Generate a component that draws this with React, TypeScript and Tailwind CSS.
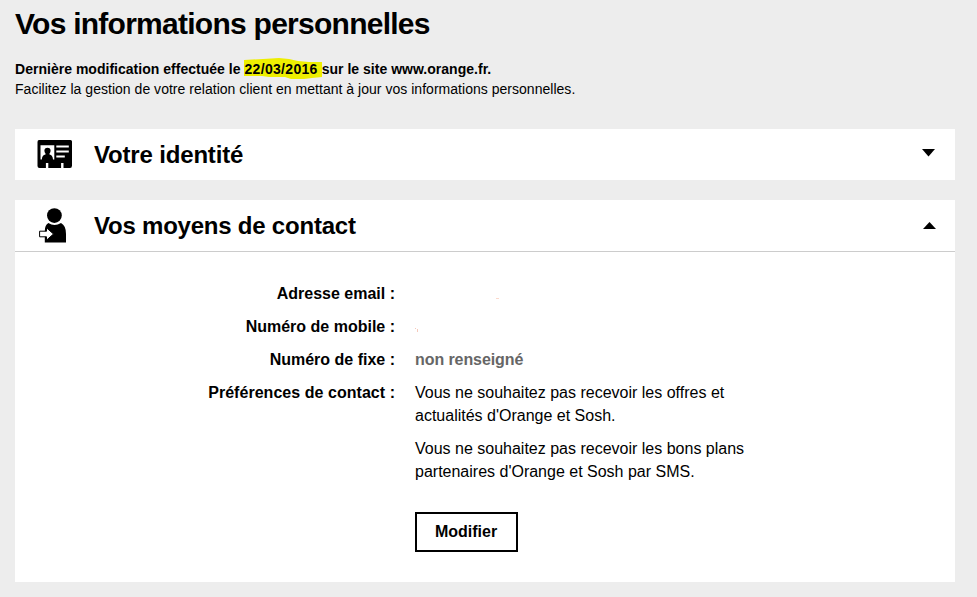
import type { ReactNode } from "react";

const contactRows = [
  { label: "Adresse email :", value: "" },
  { label: "Numéro de mobile :", value: "" },
  { label: "Numéro de fixe :", value: "non renseigné" },
];

const IdentityIcon = () => (
  <svg className="-mt-0.5" width="36" height="28" viewBox="0 0 36 28">
    <path
      d="M2 0h31.500q1.500 0 1.500 1.500v24q0 2.500-2 2.500h-6.500v-5h-2.400v5H11.300v-5H8.900v5H2.500q-2 0-2-2V2q0-2 1.500-2z"
      fill="#000"
    />
    <path d="M3.500 5.300h13.800v14.200h-1.300q-.3-4.300-3.500-5v-1q1.100-1 1.100-2.700 0-3.100-3.100-3.100t-3.100 3.100q0 1.700 1.100 2.700v1q-3.400.7-3.700 5H3.500z" fill="#fff" />
    <path d="M19.300 6.500h12.500M19.300 11.500h12.500M19.300 16.500h8.500" stroke="#fff" strokeWidth="2" />
  </svg>
);

const ContactIcon = () => (
  <svg className="ml-0.5" width="28" height="36" viewBox="0 0 28 36">
    <circle cx="15.400" cy="7.600" r="7.400" fill="#000" />
    <path d="M9.400 15q6 4 12.600 0Q27 17.500 27 26v8.500H5.800V23q0-6 3.600-8z" fill="#000" />
    <path d="M.6 23.200h6.900v-3.400l7 6.200-7 6.200v-3.400H.6z" fill="#fff" stroke="#000" strokeWidth="1" />
  </svg>
);

type SectionHeaderProps = {
  icon: ReactNode;
  title: string;
  titleClass: string;
  open?: boolean;
};

const SectionHeader = ({ icon, title, titleClass, open = false }: SectionHeaderProps) => (
  <button
    type="button"
    aria-expanded={open}
    className="flex h-[51px] w-full items-center pr-[19px] pl-[22px] text-left"
  >
    <span className="w-[57px]">{icon}</span>
    <span className={titleClass}>{title}</span>
    <svg
      className={open ? "mb-0.5 ml-auto" : "mr-px mb-1 ml-auto"}
      width="13"
      height="8"
      viewBox="0 0 13 8"
    >
      <path d={open ? "M0 8L6.500 1L13 8z" : "M0 0h13L6.500 7.500z"} fill="#000" />
    </svg>
  </button>
);

export default function App() {
  return (
    <main className="min-h-screen bg-[#ededed] pr-[22px] pl-[15px] font-['Liberation_Sans',Arial,sans-serif] text-black">
      <h1 className="pt-[5px] text-[30px] leading-[38px] font-bold tracking-[-0.74px] whitespace-nowrap">
        Vos informations personnelles
      </h1>

      <div className="pt-4 text-sm leading-5 whitespace-nowrap">
        <p className="isolate font-bold tracking-[0.02px]">
          Dernière modification effectuée le{" "}
          <span className="relative tracking-[0.32px]">
            <svg className="absolute -top-[3px] left-0 -z-10" width="78" height="22" viewBox="0 0 78 22">
              <path d="M0 2l19-1 16-1 10 1 9 2 11 1h13v15l-10 1-8 1H47l-6-2H25l-7-1H0z" fill="#eeee00" />
            </svg>
            22/03/2016
          </span>{" "}
          sur le site www.orange.fr.
        </p>
        <p className="tracking-[0.025px]">
          Facilitez la gestion de votre relation client en mettant à jour vos informations personnelles.
        </p>
      </div>

      <section className="mt-[30px] bg-white">
        <SectionHeader
          icon={<IdentityIcon />}
          title="Votre identité"
          titleClass="text-2xl font-bold tracking-[-0.17px]"
        />
      </section>

      <section className="mt-5 h-[382px] bg-white">
        <div className="border-b border-[#cccccc]">
          <SectionHeader
            icon={<ContactIcon />}
            title="Vos moyens de contact"
            titleClass="text-2xl font-bold tracking-[-0.22px]"
            open
          />
        </div>

        <dl className="relative grid grid-cols-[380px_1fr] gap-x-5 gap-y-2.5 pt-[30px] text-base leading-[23px]">
          {contactRows.map((row) => (
            <div key={row.label} className="contents">
              <dt className="text-right font-bold">{row.label}</dt>
              <dd className="font-bold tracking-[-0.08px] text-[#666666]">{row.value}</dd>
            </div>
          ))}
          <dt className="text-right font-bold tracking-[0.04px]">Préférences de contact :</dt>
          <dd className="flex flex-col gap-2.5">
            <p>
              Vous ne souhaitez pas recevoir les offres et
              <br />
              actualités d'Orange et Sosh.
            </p>
            <p>
              Vous ne souhaitez pas recevoir les bons plans
              <br />
              partenaires d'Orange et Sosh par SMS.
            </p>
          </dd>
          {/* traces of the erased email and phone number */}
          <svg className="absolute top-[44px] left-[400px]" width="90" height="40" viewBox="0 0 90 40">
            <path d="M81 2h3v1h-3z" fill="#fbd9cc" />
            <path d="M0 32h1v1H0zM2 33h1v3H2z" fill="#f5c9bb" />
          </svg>
        </dl>

        <button
          type="button"
          className="mt-[29px] ml-[400px] flex h-10 w-[103px] items-center justify-center border-2 border-black pr-px text-base font-bold"
        >
          Modifier
        </button>
      </section>
    </main>
  );
}
